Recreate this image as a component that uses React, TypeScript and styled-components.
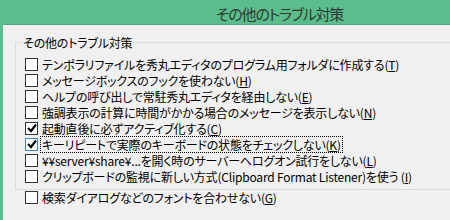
import React from 'react';
import styled, { createGlobalStyle } from 'styled-components';

const GlobalStyle = createGlobalStyle`
    html, body {
        margin: 0;
        padding: 0;
        background: #5bbd8c;
        overflow: hidden;
    }
    body {
        font-family: "Noto Sans CJK JP", "Noto Sans", sans-serif;
        font-feature-settings: "palt";
    }
`

const Window = styled.div`
    width: 450px;
    height: 220px;
    display: flex;
    flex-direction: column;
`

const TitleBar = styled.div`
    height: 24px;
    padding-left: 216px;
    padding-top: 2px;
    box-sizing: border-box;
    display: flex;
    align-items: center;
    font-size: 15px;
    letter-spacing: -1.2px;
    color: #2e3a33;
`

const Panel = styled.div`
    flex: 1;
    margin-left: 3px;
    background: #f0f0f0;
    border-top: 1px solid #4fa87b;
    padding: 9px 0 0 12px;
    overflow: hidden;
`

const Group = styled.fieldset`
    margin: 0 -20px 0 0;
    padding: 5px 0 7px 9px;
    border: 1px solid #dcdcdc;
    height: 156px;
    box-sizing: border-box;
`

const Legend = styled.legend`
    padding: 0 2px;
    margin-left: -4px;
    font-size: 12px;
    letter-spacing: -0.2px;
    color: #000;
`

const Row = styled.div<{ $gap?: number }>`
    display: flex;
    align-items: center;
    height: 16px;
    margin-top: ${ p => p.$gap ?? 0 }px;
    gap: 3px;
`

const Box = styled.span<{ $focused?: boolean }>`
    width: 11px;
    height: 11px;
    flex: none;
    background: #fff;
    border: 1px solid ${ p => p.$focused ? '#3d85d1' : '#333' };
    display: flex;
    align-items: center;
    justify-content: center;
`

const Label = styled.span<{ $focused?: boolean }>`
    font-size: 12px;
    line-height: 15px;
    letter-spacing: -0.2px;
    color: #000;
    white-space: nowrap;
    padding: 0 1px;
    outline: ${ p => p.$focused ? '1px dotted #000' : 'none' };
`

interface IOption {
    text: string;
    key: string;
    checked?: boolean;
    focused?: boolean;
    gap?: number;
}

const options: IOption[] = [
    { text: 'テンポラリファイルを秀丸エディタのプログラム用フォルダに作成する(', key: 'T' },
    { text: 'メッセージボックスのフックを使わない(', key: 'H' },
    { text: 'ヘルプの呼び出しで常駐秀丸エディタを経由しない(', key: 'E' },
    { text: '強調表示の計算に時間がかかる場合のメッセージを表示しない(', key: 'N' },
    { text: '起動直後に必ずアクティブ化する(', key: 'C', checked: true },
    { text: 'キーリピートで実際のキーボードの状態をチェックしない(', key: 'K', checked: true, focused: true },
    { text: '¥¥server¥share¥...を開く時のサーバーへログオン試行をしない(', key: 'L' },
    { text: 'クリップボードの監視に新しい方式(Clipboard Format Listener)を使う (', key: 'I' },
    { text: '検索ダイアログなどのフォントを合わせない(', key: 'G', gap: 5 },
];

const Check = () => (
    <svg width="10" height="10" viewBox="0 0 10 10">
        <path d="M1 5 L4 8 L9 1.5" fill="none" stroke="#000" strokeWidth="2.2"/>
    </svg>
)

const App: React.FC = () => {
    return (
        <Window>
            <GlobalStyle/>
            <TitleBar>その他のトラブル対策</TitleBar>
            <Panel>
                <Group>
                    <Legend>その他のトラブル対策</Legend>
                    { options.map(item => (
                        <Row key={ item.key } $gap={ item.gap }>
                            <Box $focused={ item.focused }>{ item.checked ? <Check/> : null }</Box>
                            <Label $focused={ item.focused }>{ item.text }<u>{ item.key }</u>)</Label>
                        </Row>
                    )) }
                </Group>
            </Panel>
        </Window>
    )
}

export default App;
